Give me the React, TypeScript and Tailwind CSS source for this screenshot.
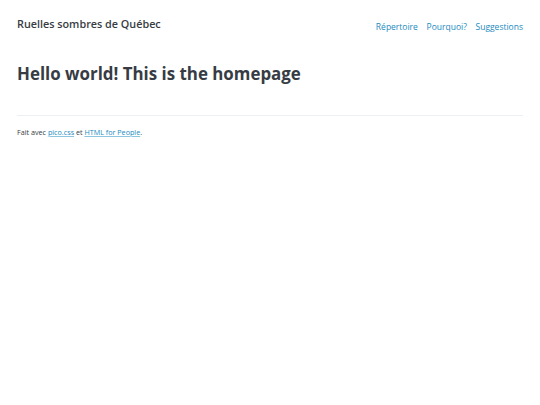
export default function App() {
  return (
    <div className="min-h-screen bg-white text-[#373c44]" style={{ fontFamily: '"Open Sans", "Noto Sans", sans-serif' }}>
      <div className="px-[17px]">
        <header className="flex items-start justify-between pt-[16px]">
          <div className="text-[10.8px] font-semibold leading-[16px]">Ruelles sombres de Québec</div>
          <nav className="mt-[4px] flex gap-[8.7px] text-[8.5px] leading-[14px] text-[#1b8bc0]">
            <a>Répertoire</a>
            <a>Pourquoi?</a>
            <a>Suggestions</a>
          </nav>
        </header>
        <main className="pt-[27px] pb-[28px]">
          <h1 className="text-[16.9px] font-bold leading-[26px]">Hello world! This is the homepage</h1>
        </main>
        <footer className="border-t border-[#edf0f3] pt-[11px] text-[7.2px] leading-[10px]">
          Fait avec <a className="text-[#1b8bc0] underline decoration-[#1b8bc0]/50">pico.css</a> et{" "}
          <a className="text-[#1b8bc0] underline decoration-[#1b8bc0]/50">HTML for People</a>.
        </footer>
      </div>
    </div>
  );
}
